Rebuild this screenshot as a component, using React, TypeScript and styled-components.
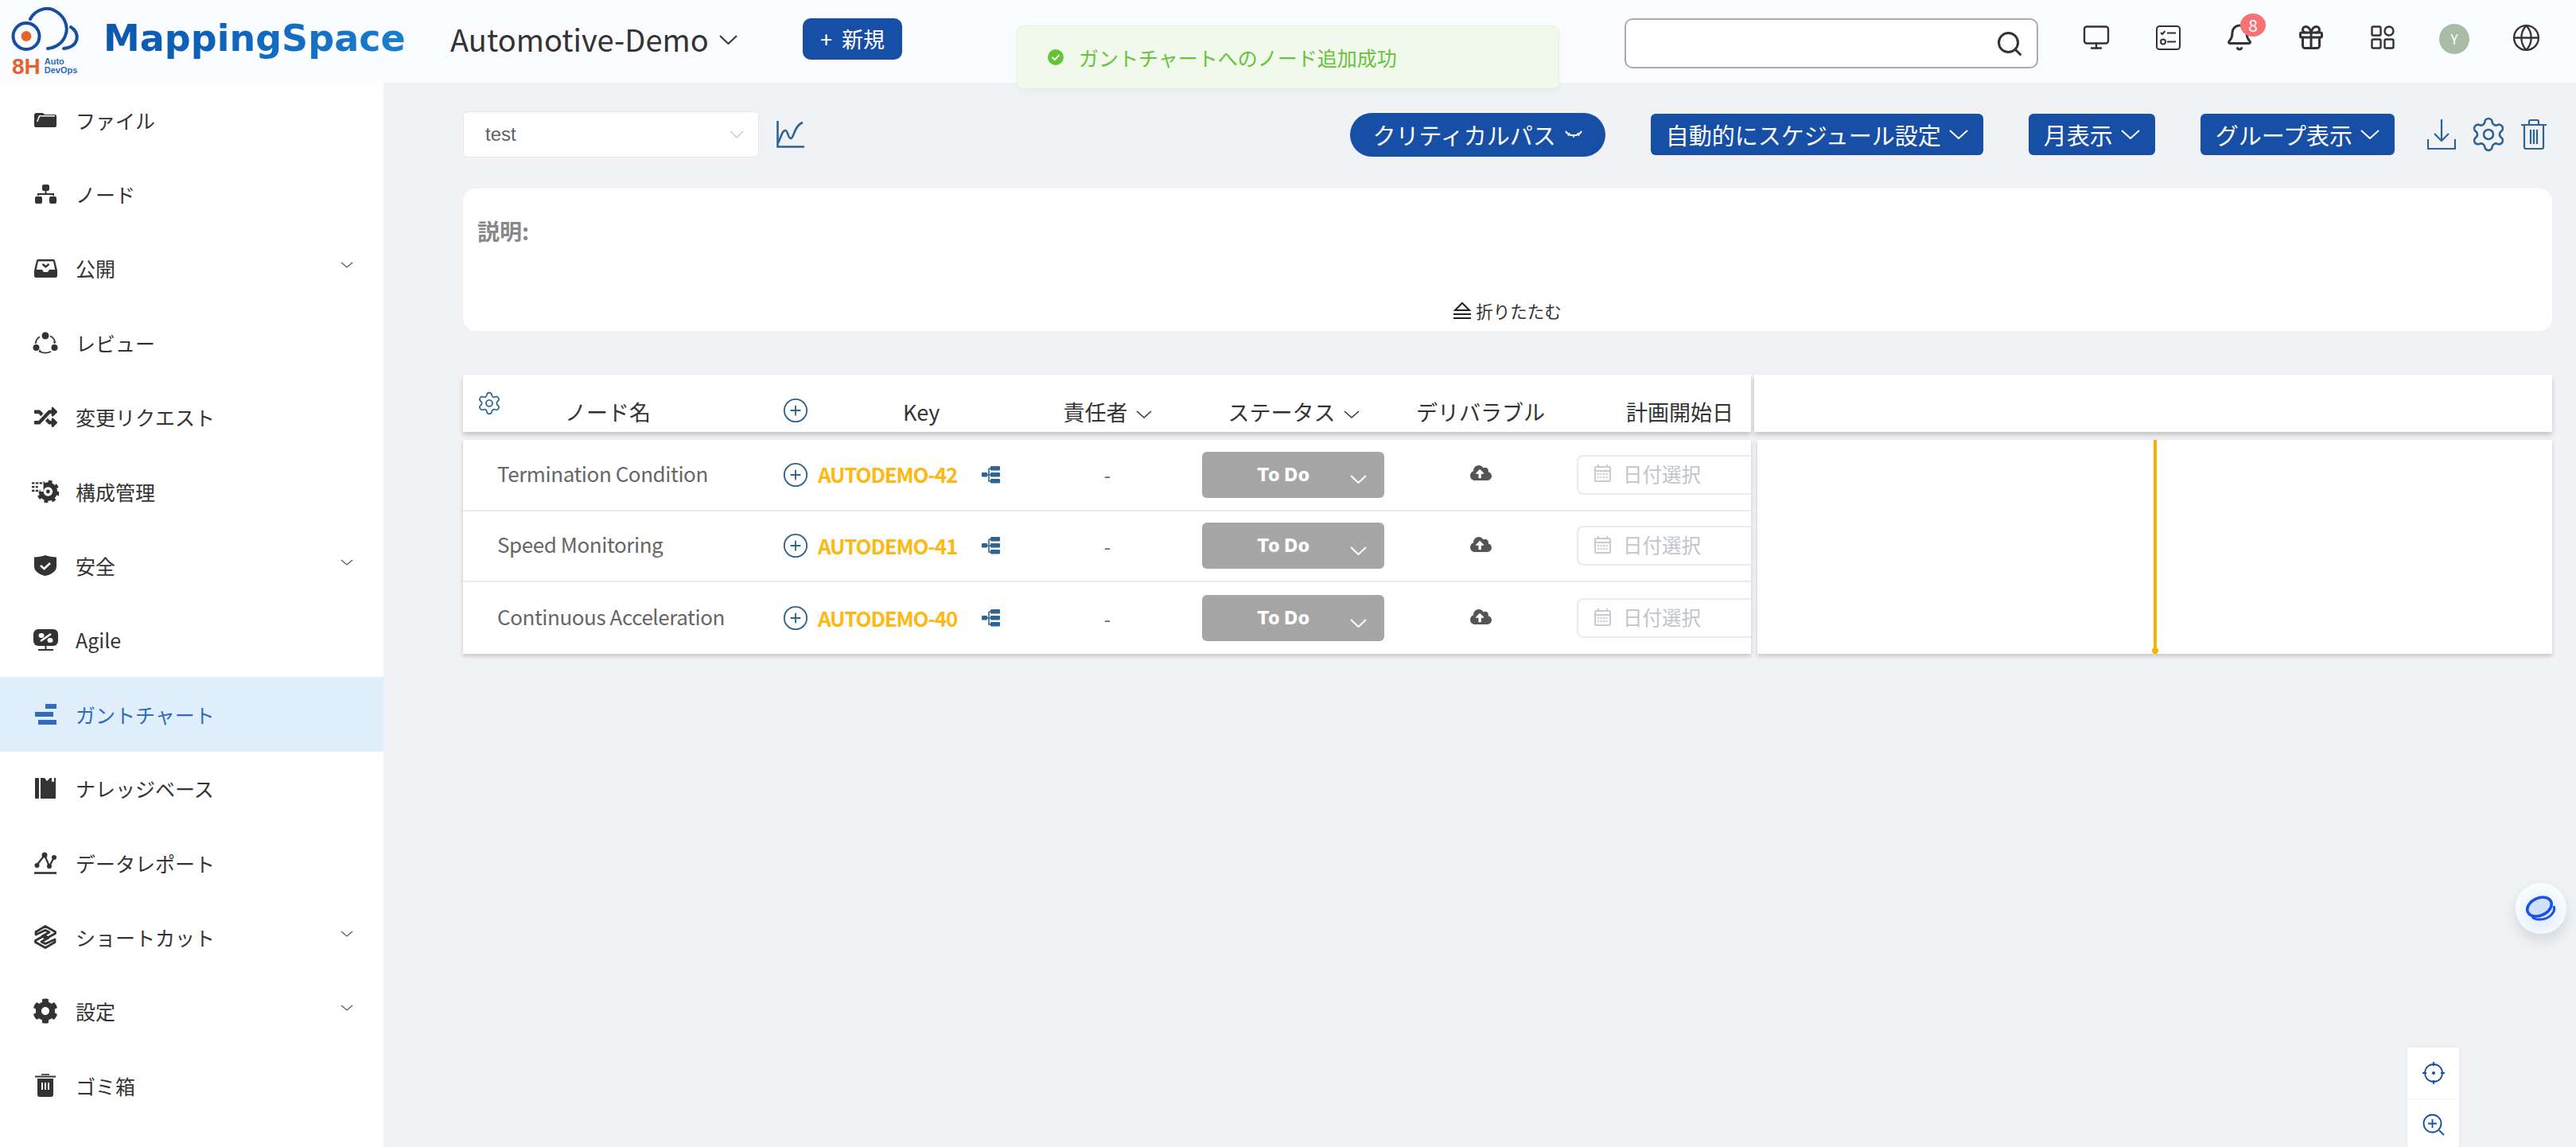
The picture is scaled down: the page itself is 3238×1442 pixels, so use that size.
import React from 'react';
import styled, { createGlobalStyle } from 'styled-components';
import { Settings, Monitor, Bell, Gift, Globe, Search, CirclePlus } from 'lucide-react';
import { FaRandom, FaCog, FaCloudUploadAlt } from 'react-icons/fa';

const FONT = '"Noto Sans CJK JP", "Noto Sans", sans-serif';
const BLUE = '#174ea6';
const STEEL = '#2f6391';

const Global = createGlobalStyle`
  html, body { margin: 0; padding: 0; height: 100%; overflow: hidden; background: #f0f2f6; }
  * { box-sizing: border-box; }
  body { font-family: ${FONT}; }
`;

const Page = styled.div`
  position: relative;
  width: 3238px;
  height: 1442px;
  overflow: hidden;
  display: flex;
  flex-direction: column;
`;

const Header = styled.header`
  height: 104px;
  flex: none;
  background: #fbfcff;
  display: flex;
  align-items: center;
`;

const LogoBlock = styled.div`
  width: 90px;
  margin-left: 12px;
  display: flex;
  flex-direction: column;
  align-items: flex-start;
`;

const LogoBottom = styled.div`
  display: flex;
  align-items: center;
  gap: 5px;
  margin-left: 3px;
`;

const EightH = styled.span`
  font-family: "Liberation Sans", sans-serif;
  font-weight: 700;
  font-size: 28px;
  line-height: 25px;
  color: #e8622c;
`;

const AutoDevOps = styled.span`
  font-family: "Liberation Sans", sans-serif;
  font-weight: 700;
  font-size: 11px;
  line-height: 11px;
  color: #2a6db5;
`;

const Wordmark = styled.span`
  margin-left: 28px;
  margin-top: -8px;
  width: 380px;
  font-family: "DejaVu Sans", sans-serif;
  font-weight: 700;
  font-size: 46px;
  line-height: 60px;
  background: linear-gradient(100deg, #0d58ae 0%, #0f63ba 40%, #1a7fd0 100%);
  -webkit-background-clip: text;
  background-clip: text;
  color: transparent;
  white-space: nowrap;
`;

const ProjectName = styled.div`
  margin-left: 56px;
  margin-top: -8px;
  width: 358px;
  display: flex;
  align-items: center;
  gap: 13px;
  font-size: 38px;
  color: #333;
  white-space: nowrap;
`;

const NameCaret = styled.span`
  display: flex;
  margin-top: 4px;
`;

const NewButton = styled.button`
  margin-left: 85px;
  margin-top: -7px;
  width: 125px;
  height: 52px;
  border: none;
  border-radius: 10px;
  background: ${BLUE};
  color: #fff;
  font-family: ${FONT};
  font-size: 27px;
  display: flex;
  align-items: center;
  justify-content: center;
  gap: 12px;
  padding: 0;
`;

const SearchBox = styled.div`
  margin-left: auto;
  margin-top: 5px;
  width: 520px;
  height: 63px;
  background: #fff;
  border: 2px solid #aaa;
  border-radius: 10px;
  display: flex;
  align-items: center;
  justify-content: flex-end;
  padding-right: 16px;
  color: #333;
`;

const IconRow = styled.div`
  margin-left: 28px;
  margin-right: 18px;
  width: 630px;
  display: grid;
  grid-template-columns: repeat(7, 90px);
  align-items: center;
  justify-items: center;
  color: #333;
  transform: translateY(-5px);
`;

const BellWrap = styled.div`
  position: relative;
  display: flex;
`;

const Badge = styled.span`
  position: absolute;
  left: 19px;
  top: -12px;
  width: 32px;
  height: 29px;
  border-radius: 50%;
  background: #f77373;
  color: #fff;
  font-size: 21px;
  line-height: 28px;
  text-align: center;
`;

const Avatar = styled.div`
  width: 38px;
  height: 38px;
  margin-top: 4px;
  border-radius: 50%;
  background: #a9bda6;
  color: #fff;
  font-size: 17px;
  line-height: 38px;
  text-align: center;
`;

const Toast = styled.div`
  position: absolute;
  left: 1278px;
  top: 32px;
  width: 682px;
  height: 80px;
  background: #f0f9eb;
  border: 1px solid #e6f3dc;
  border-radius: 8px;
  box-shadow: 0 2px 8px rgba(0, 0, 0, 0.04);
  display: flex;
  align-items: center;
  gap: 18px;
  padding-left: 37px;
  font-size: 25px;
  color: #67c23a;
  z-index: 5;
`;

const Body = styled.div`
  flex: 1;
  display: flex;
  min-height: 0;
`;

const Sidebar = styled.nav`
  width: 482px;
  flex: none;
  background: #fff;
`;

const NavItem = styled.div<{ $active?: boolean }>`
  height: 93.4px;
  display: flex;
  align-items: center;
  padding-left: 40px;
  background: ${p => (p.$active ? '#e1eefc' : 'transparent')};
  color: ${p => (p.$active ? '#2f6bc0' : '#333')};
  font-size: 25px;
`;

const NavIcon = styled.span`
  width: 34px;
  height: 34px;
  margin-right: 21px;
  display: flex;
  align-items: center;
  justify-content: center;
  flex: none;
`;

const NavCaret = styled.span`
  margin-left: auto;
  margin-right: 38px;
  margin-top: -8px;
  display: flex;
  color: #555;
`;

const Main = styled.main`
  flex: 1;
  min-width: 0;
  padding: 36px 30px 0 100px;
  position: relative;
`;

const Toolbar = styled.div`
  height: 58px;
  display: flex;
  align-items: center;
  margin-bottom: 39px;
`;

const SelectBox = styled.div`
  width: 372px;
  height: 58px;
  background: #fff;
  border: 1px solid #e4e7ed;
  border-radius: 6px;
  display: flex;
  align-items: center;
  justify-content: space-between;
  padding: 0 18px 0 27px;
  font-family: "Liberation Sans", sans-serif;
  font-size: 24px;
  color: #606266;
`;

const SelectCaret = styled.span`
  display: flex;
  color: #c0c4cc;
`;

const ChartBtn = styled.span`
  display: flex;
  margin-left: 22px;
  margin-right: auto;
`;

const ActionGroup = styled.div`
  display: flex;
  align-items: center;
  gap: 57px;
`;

const ActionButton = styled.button<{ $pill?: boolean }>`
  height: ${p => (p.$pill ? '55px' : '52px')};
  padding: 0 ${p => (p.$pill ? '28px' : '19px')};
  border: none;
  border-radius: ${p => (p.$pill ? '28px' : '6px')};
  background: ${BLUE};
  color: #fff;
  font-family: ${FONT};
  font-size: 29px;
  display: flex;
  align-items: center;
  gap: 10px;
  white-space: nowrap;
`;

const ToolIcons = styled.div`
  margin-left: 41px;
  margin-right: 7px;
  display: flex;
  align-items: center;
  gap: 17px;
  color: ${STEEL};
`;

const DescCard = styled.section`
  height: 179px;
  background: #fff;
  border-radius: 16px;
  padding: 33px 18px 0;
  display: flex;
  flex-direction: column;
  margin-bottom: 55px;
`;

const DescLabel = styled.div`
  font-size: 28px;
  font-weight: 700;
  color: #888;
  line-height: 40px;
`;

const Collapse = styled.div`
  margin-top: auto;
  margin-bottom: 10px;
  display: flex;
  align-items: center;
  justify-content: center;
  gap: 6px;
  font-size: 21.5px;
  color: #333;
  line-height: 30px;
`;

const HeadLine = styled.div`
  display: flex;
  gap: 4px;
  height: 72px;
  margin-bottom: 10px;
`;

const COLS = '398px 310px 204px 264px 206px 237px';

const HeadLeft = styled.div`
  width: 1619px;
  flex: none;
  background: #fff;
  box-shadow: 0 4px 6px rgba(0, 0, 0, 0.18);
  display: grid;
  grid-template-columns: ${COLS};
  font-size: 27px;
  color: #333;
`;

const HeadRight = styled.div`
  flex: 1;
  background: #fff;
  box-shadow: 0 4px 6px rgba(0, 0, 0, 0.18);
`;

const HeadCell = styled.div<{ $pad?: string; $justify?: string }>`
  display: flex;
  align-items: flex-end;
  justify-content: ${p => p.$justify || 'center'};
  padding: ${p => p.$pad || '0'};
  padding-bottom: 5px;
  gap: 10px;
  line-height: 40px;
  white-space: nowrap;
  position: relative;
`;

const HeadGear = styled.span`
  position: absolute;
  left: 17px;
  top: 20px;
  display: flex;
  color: ${STEEL};
`;

const HeadPlus = styled.span`
  display: flex;
  color: ${STEEL};
  margin-bottom: 5px;
`;

const HeadKey = styled.span`
  margin-left: 108px;
`;

const HeadCaret = styled.span`
  display: flex;
  margin-bottom: 12px;
`;

const RowsLine = styled.div`
  display: flex;
  gap: 8px;
  height: 269px;
`;

const RowsLeft = styled.div`
  width: 1619px;
  flex: none;
  background: #fff;
  box-shadow: 0 3px 5px rgba(0, 0, 0, 0.18);
`;

const RowsRight = styled.div`
  flex: 1;
  background: #fff;
  box-shadow: 0 3px 5px rgba(0, 0, 0, 0.18);
  position: relative;
`;

const TodayLine = styled.div`
  position: absolute;
  left: 498px;
  top: 0;
  bottom: 0;
  width: 4px;
  background: #f5b400;
  &::after {
    content: '';
    position: absolute;
    left: -2px;
    bottom: 0;
    width: 8px;
    height: 8px;
    border-radius: 50%;
    background: #f5b400;
  }
`;

const Row = styled.div`
  height: 89.67px;
  display: grid;
  grid-template-columns: ${COLS};
  align-items: center;
  border-bottom: 2px solid #ebebeb;
  &:last-child { border-bottom: none; }
`;

const NameCell = styled.div`
  padding-left: 43px;
  margin-top: -5px;
  font-size: 26px;
  letter-spacing: -0.43px;
  color: #666;
  white-space: nowrap;
`;

const KeyCell = styled.div`
  display: flex;
  align-items: center;
  padding-left: 3px;
  color: ${STEEL};
`;

const KeyLink = styled.span`
  margin-left: 11px;
  margin-right: 31px;
  margin-top: -2px;
  width: 175px;
  font-size: 26px;
  letter-spacing: -1.2px;
  font-weight: 700;
  color: #fdb813;
  white-space: nowrap;
`;

const DashCell = styled.div`
  text-align: center;
  font-size: 24px;
  color: #666;
`;

const StatusCell = styled.div`
  padding-left: 17px;
`;

const StatusButton = styled.div`
  width: 229px;
  height: 58px;
  background: #a6a6a6;
  border-radius: 6px;
  display: flex;
  align-items: center;
  padding: 0 22px 0 69px;
  color: #fff;
  font-family: Inter, sans-serif;
  font-weight: 800;
  font-size: 23px;
  letter-spacing: 0.5px;
  justify-content: space-between;
`;

const StatusCaret = styled.span`
  display: flex;
  margin-top: 12px;
`;

const CloudCell = styled.div`
  display: flex;
  justify-content: center;
  color: #555;
  margin-top: -4px;
`;

const DateCell = styled.div`
  padding-left: 18px;
  overflow: hidden;
`;

const DateField = styled.div`
  width: 300px;
  height: 50px;
  background: #fff;
  border: 2px solid #e9ebef;
  border-radius: 8px;
  display: flex;
  align-items: center;
  gap: 15px;
  padding: 0 0 3px 20px;
  font-size: 24.5px;
  color: #c0c4cc;
`;

const FloatBall = styled.div`
  position: absolute;
  left: 3162px;
  top: 1110px;
  width: 64px;
  height: 64px;
  border-radius: 50%;
  background: radial-gradient(circle at 50% 60%, #dbe8ff 0%, #f4fbff 60%, #ffffff 100%);
  box-shadow: 0 8px 18px rgba(0, 0, 0, 0.12);
  display: flex;
  align-items: center;
  justify-content: center;
`;

const ZoomPanel = styled.div`
  position: absolute;
  left: 3026px;
  top: 1317px;
  width: 65px;
  height: 140px;
  background: #fff;
  box-shadow: 0 0 6px rgba(0, 0, 0, 0.05);
  color: ${BLUE};
`;

const ZoomCell = styled.div`
  height: 65px;
  display: flex;
  align-items: center;
  justify-content: center;
  border-bottom: 1px solid #f5f5f5;
`;

const Caret = ({ w = 16, h = 8, sw = 1.2 }: { w?: number; h?: number; sw?: number }) => (
  <svg width={w} height={h} viewBox={`0 0 ${w} ${h}`} fill="none" stroke="currentColor" strokeWidth={sw}>
    <path d={`M1 1 ${w / 2} ${h - 1} ${w - 1} 1`} />
  </svg>
);

const LogoMark = () => (
  <svg width="90" height="62" viewBox="0 0 90 62" fill="none">
    <circle cx="21" cy="36.500" r="16.500" stroke="#14509f" strokeWidth="4" />
    <circle cx="21" cy="36.500" r="6.500" fill="#e8622c" />
    <path d="M26 15C32 3 47-1 56 4c12 6 18 18 15 29-3 12-13 18-23 19" stroke="#14509f" strokeWidth="4" strokeLinecap="round" />
    <path d="M77 25c12 7 11 25-9 27" stroke="#14509f" strokeWidth="4" strokeLinecap="round" />
  </svg>
);

const dark = '#333';
const iconFile = (
  <svg width="28" height="18" viewBox="0 0 28 18"><path fill={dark} d="M3 0h8l2 2h13a2 2 0 0 1 2 2v12a2 2 0 0 1-2 2H2a2 2 0 0 1-2-2V3a3 3 0 0 1 3-3z" /><path fill="#fff" d="M6 3h20v1.500H7.200L4.500 11H3z" /></svg>
);
const iconNode = (
  <svg width="27" height="24" viewBox="0 0 27 24"><rect x="9" width="9" height="8" rx="2" fill={dark} /><rect y="15" width="9" height="9" rx="2" fill={dark} /><rect x="18" y="15" width="9" height="9" rx="2" fill={dark} /><path d="M13.500 8v4M4 14v-2h19v2" stroke={dark} strokeWidth="2" fill="none" /></svg>
);
const iconPublish = (
  <svg width="29" height="23" viewBox="0 0 29 23"><path fill={dark} d="M0 14 3 1.500A2 2 0 0 1 5 0h19a2 2 0 0 1 2 1.500L29 14v7a2 2 0 0 1-2 2H2a2 2 0 0 1-2-2z" /><path fill="#fff" d="M5 2.500h19l2.200 10.500H19l-2 3h-5l-2-3H2.800z" /><path d="m10.500 6 4 3.500 4-3.500" stroke={dark} strokeWidth="2.400" fill="none" /></svg>
);
const iconReview = (
  <svg width="32" height="28" viewBox="0 0 32 28" fill="none"><circle cx="16" cy="5" r="4.500" fill={dark} /><circle cx="4.500" cy="20" r="4" fill={dark} /><circle cx="27.500" cy="20" r="4" fill={dark} /><path d="M9 6.500C6 8 4 11 3.600 15M22 5.500c3 1 5 3.600 6 7M9 25c4 2 10 2 14 0" stroke={dark} strokeWidth="1.800" /><path d="m30 13-4-1 1 3.500zM9 22l-1.500 3.500 4 .5z" fill={dark} /></svg>
);
const iconConfig = (
  <svg width="35" height="30" viewBox="0 0 35 30" fill="none">
    <circle cx="21" cy="15" r="9" stroke={dark} strokeWidth="6" />
    <circle cx="21" cy="15" r="13" stroke={dark} strokeWidth="3.500" strokeDasharray="5 5.200" />
    <path d="M0 2h15v13H0z" fill="#fff" />
    <path d="M0 4h14M0 9h8M0 14h11" stroke={dark} strokeWidth="2.400" strokeDasharray="3.500 1.500" />
    <circle cx="21" cy="15" r="2.500" fill={dark} />
  </svg>
);
const iconShield = (
  <svg width="28" height="26" viewBox="0 0 28 26"><path fill={dark} d="M0 2.500C5 2.500 10 1.500 14 0c4 1.500 9 2.500 14 2.500V14c0 6-6 10-14 12C6 24 0 20 0 14z" /><path d="m8 13 4.500 4L20 10" stroke="#fff" strokeWidth="2.600" fill="none" /></svg>
);
const iconAgile = (
  <svg width="31" height="27" viewBox="0 0 31 27"><rect width="31" height="21" rx="6" fill={dark} /><path d="M15.500 21v4M6 26h19" stroke={dark} strokeWidth="2" /><ellipse cx="10" cy="8" rx="3.500" ry="3" fill="#fff" /><ellipse cx="21" cy="14" rx="3.500" ry="3" fill="#fff" /><path d="M9 15 22 6" stroke="#fff" strokeWidth="2.500" /></svg>
);
const iconGantt = (
  <svg width="27" height="26" viewBox="0 0 27 26" fill="#2f6bc0"><rect x="13" width="14" height="6" /><rect y="10" width="23" height="6" /><rect x="4" y="20" width="23" height="6" /></svg>
);
const iconBook = (
  <svg width="26" height="26" viewBox="0 0 26 26"><rect width="5" height="26" rx="1" fill={dark} /><path fill={dark} d="M7 0h5l3 4 4-4 7 0v26H7z" /><path fill="#fff" d="M21 0h3v5.500l-1.500-1.500L21 5.500z" /></svg>
);
const iconReport = (
  <svg width="28" height="28" viewBox="0 0 28 28" fill="none"><path d="M0 26.500h28" stroke={dark} strokeWidth="2.600" /><path d="M3 17 13 4l6 14 6-11" stroke={dark} strokeWidth="2.200" /><g fill={dark}><circle cx="3.500" cy="17" r="3" /><circle cx="13" cy="4" r="3.500" /><circle cx="19" cy="18" r="3" /><circle cx="25" cy="7" r="3" /></g></svg>
);
const iconShortcut = (
  <svg width="28" height="30" viewBox="0 0 28 30" fill="none" stroke={dark} strokeWidth="2.800" strokeLinejoin="round"><path d="M14 1.500 26.500 8.500v2L15 17l-5-3 9-5-5-2.500L2 12v-3.500zM14 28.500 1.500 21.500v-2L13 13l5 3-9 5 5 2.500L26 18v3.500z" /></svg>
);
const iconBin = (
  <svg width="26" height="29" viewBox="0 0 26 29"><path d="M0 3.500h26" stroke={dark} strokeWidth="2" /><path d="M8 .8h10" stroke={dark} strokeWidth="1.600" /><path fill={dark} d="M3 6h20v20a3 3 0 0 1-3 3H6a3 3 0 0 1-3-3z" /><path d="M9 11v9M13 11v9M17 11v9" stroke="#fff" strokeWidth="2" /></svg>
);

const NAV: { label: string; icon: React.ReactNode; caret?: boolean; active?: boolean }[] = [
  { label: 'ファイル', icon: iconFile },
  { label: 'ノード', icon: iconNode },
  { label: '公開', icon: iconPublish, caret: true },
  { label: 'レビュー', icon: iconReview },
  { label: '変更リクエスト', icon: <FaRandom size={29} color={dark} /> },
  { label: '構成管理', icon: iconConfig },
  { label: '安全', icon: iconShield, caret: true },
  { label: 'Agile', icon: iconAgile },
  { label: 'ガントチャート', icon: iconGantt, active: true },
  { label: 'ナレッジベース', icon: iconBook },
  { label: 'データレポート', icon: iconReport },
  { label: 'ショートカット', icon: iconShortcut, caret: true },
  { label: '設定', icon: <FaCog size={32} color={dark} />, caret: true },
  { label: 'ゴミ箱', icon: iconBin },
];

const ROWS = [
  { name: 'Termination Condition', key: 'AUTODEMO-42' },
  { name: 'Speed Monitoring', key: 'AUTODEMO-41' },
  { name: 'Continuous Acceleration', key: 'AUTODEMO-40' },
];

const ChecklistIcon = () => (
  <svg width="31" height="31" viewBox="0 0 31 31" fill="none" stroke="currentColor" strokeWidth="2"><rect x="1" y="1" width="29" height="29" rx="3.500" /><path d="m6 9 2 2 3.500-4M14 9.500h11M14 20.500h11" /><circle cx="9" cy="20.500" r="3" /></svg>
);

const AppsIcon = () => (
  <svg width="30" height="30" viewBox="0 0 30 30" fill="none" stroke="currentColor" strokeWidth="2.400"><rect x="1.500" y="1.500" width="11" height="11" rx="1.500" /><ellipse cx="23" cy="7" rx="5.500" ry="5.500" /><rect x="1.500" y="17.500" width="11" height="11" rx="1.500" /><rect x="17.500" y="17.500" width="11" height="11" rx="1.500" /></svg>
);

const ChartIcon = () => (
  <svg width="35" height="34" viewBox="0 0 35 34" fill="none" stroke={STEEL} strokeWidth="2.600"><path d="M1.500 0v32.500H35" /><path d="M2 28c4-8 5-16 9-16s3 10 7 10 4-16 15-20" /></svg>
);

const DownloadIcon = () => (
  <svg width="36" height="38" viewBox="0 0 36 38" fill="none" stroke="currentColor" strokeWidth="2.200"><path d="M18 0v27M9 18l9 9 9-9" /><path d="M1 25v12h34V25" /></svg>
);

const TrashIcon = () => (
  <svg width="32" height="38" viewBox="0 0 32 38" fill="none" stroke="currentColor" strokeWidth="2.200"><path d="M0 7h32M10 7V3a2 2 0 0 1 2-2h8a2 2 0 0 1 2 2v4" /><path d="M4 7v28a2 2 0 0 0 2 2h20a2 2 0 0 0 2-2V7M12 13v18M16 13v18M20 13v18" /></svg>
);

const SmileCaret = () => (
  <svg width="24" height="14" viewBox="0 0 24 14" fill="none" stroke="#fff" strokeWidth="2.200"><path d="M2 3c4 7 16 7 20 0" /><path d="M7 5 5 9M12 7v4M17 5l2 4" strokeWidth="1.400" /></svg>
);

const TreeIcon = () => (
  <svg width="23" height="22" viewBox="0 0 23 22" fill="none"><g fill={STEEL}><rect x="11" width="12" height="5.500" rx="1" /><rect x="11" y="8" width="12" height="5.500" rx="1" /><rect x="11" y="16" width="12" height="5.500" rx="1" /><rect y="8" width="7" height="5.500" rx="1" /></g><path d="M7 11h4M9 3v16h3M9 3h3" stroke={STEEL} strokeWidth="1.600" /></svg>
);

const CalendarIcon = () => (
  <svg width="21" height="22" viewBox="0 0 21 22" fill="none" stroke="#c8ccd2" strokeWidth="2"><rect x="1" y="3" width="19" height="18" rx="1" /><path d="M1 8h19M5 0v4M16 0v4" /><path d="M4 12h13M4 16h13" strokeDasharray="2 1.500" /></svg>
);

const CollapseIcon = () => (
  <svg width="22" height="24" viewBox="0 0 22 24" fill="none" stroke="#222" strokeWidth="2"><path d="M2 11 11 2l9 9zM0 16h22M0 21h22" /></svg>
);

const TargetIcon = () => (
  <svg width="28" height="28" viewBox="0 0 28 28" fill="none" stroke="currentColor" strokeWidth="1.800"><circle cx="14" cy="14" r="11" /><circle cx="14" cy="14" r="2" fill="currentColor" stroke="none" /><path d="M14 0v5M14 23v5M0 14h5M23 14h5" /></svg>
);

const ZoomInIcon = () => (
  <svg width="28" height="28" viewBox="0 0 28 28" fill="none" stroke="currentColor" strokeWidth="1.800"><circle cx="12.500" cy="12.500" r="11" /><path d="M12.500 7v11M7 12.500h11M21 21l6 6" /></svg>
);

const RingIcon = () => (
  <svg width="38" height="34" viewBox="0 0 38 34" fill="none" stroke="#1d50e4" strokeWidth="3.600"><ellipse cx="17" cy="15" rx="16" ry="11" transform="rotate(-25 17 15)" fill="#cfe2fb" /><path d="M35 14c3 8-6 17-18 17-4 0-7-1-9-3" strokeWidth="3" /></svg>
);

const CheckDot = () => (
  <svg width="22" height="22" viewBox="0 0 22 22"><circle cx="11" cy="11" r="10" fill="#67c23a" /><path d="m6.500 11 3.200 3.200 5.800-6" stroke="#fff" strokeWidth="1.800" fill="none" /></svg>
);

export default function App() {
  return (
    <Page>
      <Global />
      <Header>
        <LogoBlock>
          <LogoMark />
          <LogoBottom>
            <EightH>8H</EightH>
            <AutoDevOps>Auto<br />DevOps</AutoDevOps>
          </LogoBottom>
        </LogoBlock>
        <Wordmark>MappingSpace</Wordmark>
        <ProjectName>
          Automotive-Demo
          <NameCaret><Caret w={23} h={12} sw={2} /></NameCaret>
        </ProjectName>
        <NewButton><span>+</span><span>新規</span></NewButton>
        <SearchBox><Search size={36} strokeWidth={2} /></SearchBox>
        <IconRow>
          <Monitor size={36} strokeWidth={1.6} />
          <ChecklistIcon />
          <BellWrap>
            <Bell size={36} strokeWidth={2} />
            <Badge>8</Badge>
          </BellWrap>
          <Gift size={36} strokeWidth={2} />
          <AppsIcon />
          <Avatar>Y</Avatar>
          <Globe size={37} strokeWidth={1.5} />
        </IconRow>
      </Header>
      <Toast><CheckDot />ガントチャートへのノード追加成功</Toast>
      <Body>
        <Sidebar>
          {NAV.map(item => (
            <NavItem key={item.label} $active={item.active}>
              <NavIcon>{item.icon}</NavIcon>
              {item.label}
              {item.caret && <NavCaret><Caret /></NavCaret>}
            </NavItem>
          ))}
        </Sidebar>
        <Main>
          <Toolbar>
            <SelectBox>test<SelectCaret><Caret w={18} h={10} /></SelectCaret></SelectBox>
            <ChartBtn><ChartIcon /></ChartBtn>
            <ActionGroup>
              <ActionButton $pill>クリティカルパス<SmileCaret /></ActionButton>
              <ActionButton>自動的にスケジュール設定<Caret w={24} h={12} sw={2} /></ActionButton>
              <ActionButton>月表示<Caret w={24} h={12} sw={2} /></ActionButton>
              <ActionButton>グループ表示<Caret w={24} h={12} sw={2} /></ActionButton>
            </ActionGroup>
            <ToolIcons>
              <DownloadIcon />
              <Settings size={48} strokeWidth={1.3} />
              <TrashIcon />
            </ToolIcons>
          </Toolbar>
          <DescCard>
            <DescLabel>説明:</DescLabel>
            <Collapse><CollapseIcon />折りたたむ</Collapse>
          </DescCard>
          <HeadLine>
            <HeadLeft>
              <HeadCell $justify="flex-start" $pad="0 0 0 128px">
                <HeadGear><Settings size={32} strokeWidth={1.3} /></HeadGear>
                ノード名
              </HeadCell>
              <HeadCell $justify="flex-start" $pad="0 0 0 3px">
                <HeadPlus><CirclePlus size={34} strokeWidth={1.3} /></HeadPlus>
                <HeadKey>Key</HeadKey>
              </HeadCell>
              <HeadCell>責任者<HeadCaret><Caret w={20} h={10} sw={1.5} /></HeadCaret></HeadCell>
              <HeadCell>ステータス<HeadCaret><Caret w={20} h={10} sw={1.5} /></HeadCaret></HeadCell>
              <HeadCell>デリバラブル</HeadCell>
              <HeadCell $justify="flex-end" $pad="0 22px 0 0">計画開始日</HeadCell>
            </HeadLeft>
            <HeadRight />
          </HeadLine>
          <RowsLine>
            <RowsLeft>
              {ROWS.map(r => (
                <Row key={r.key}>
                  <NameCell>{r.name}</NameCell>
                  <KeyCell>
                    <CirclePlus size={34} strokeWidth={1.3} />
                    <KeyLink>{r.key}</KeyLink>
                    <TreeIcon />
                  </KeyCell>
                  <DashCell>-</DashCell>
                  <StatusCell>
                    <StatusButton>To Do<StatusCaret><Caret w={21} h={11} sw={2} /></StatusCaret></StatusButton>
                  </StatusCell>
                  <CloudCell><FaCloudUploadAlt size={27} /></CloudCell>
                  <DateCell>
                    <DateField><CalendarIcon />日付選択</DateField>
                  </DateCell>
                </Row>
              ))}
            </RowsLeft>
            <RowsRight><TodayLine /></RowsRight>
          </RowsLine>
        </Main>
      </Body>
      <FloatBall><RingIcon /></FloatBall>
      <ZoomPanel>
        <ZoomCell><TargetIcon /></ZoomCell>
        <ZoomCell><ZoomInIcon /></ZoomCell>
      </ZoomPanel>
    </Page>
  );
}
